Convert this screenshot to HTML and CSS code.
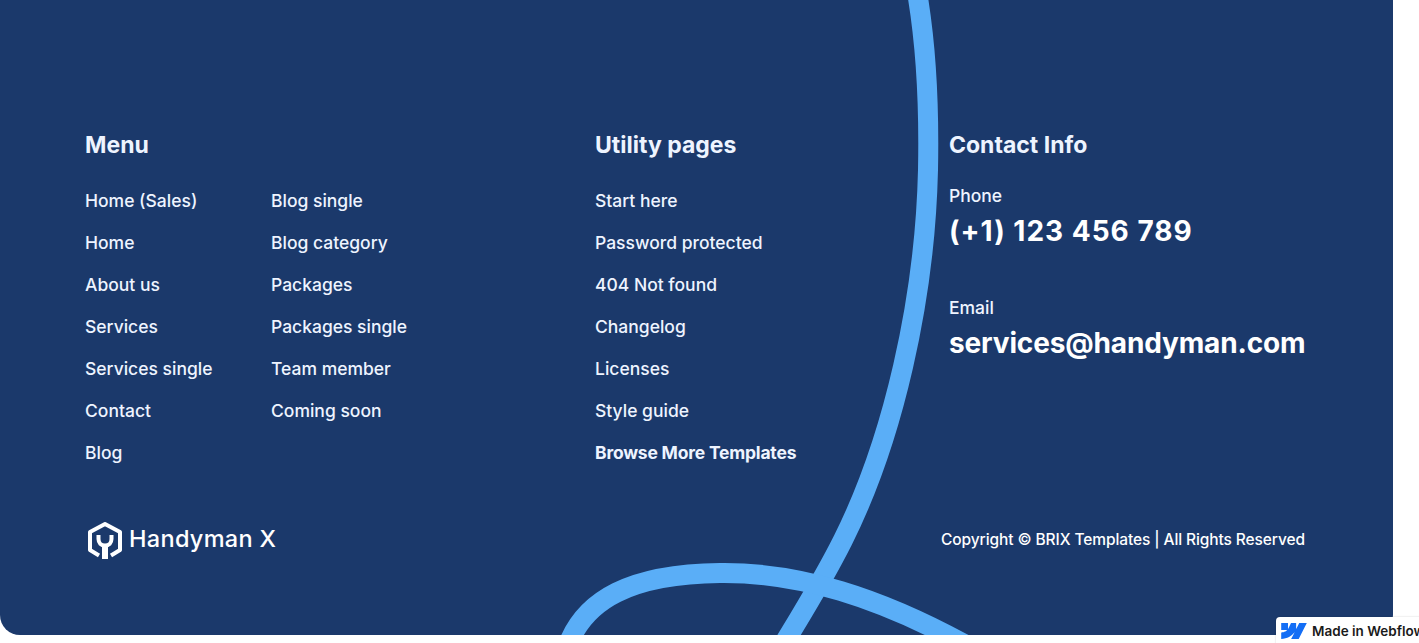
FILE: index.html
```html
<!DOCTYPE html>
<html lang="en">
<head>
  <meta charset="UTF-8">
  <title>Handyman X</title>
  <link rel="stylesheet" href="styles.css">
</head>
<body>
  <footer class="footer">
    <svg class="curves" width="1393" height="635" viewBox="0 0 1393 635" fill="none">
      <path d="M918 -2C928 60 929 120 928 170C925 300 893 440 843 540C823 580 803 612 783 645" stroke="#5aaef7" stroke-width="20"/>
      <path d="M568 645C585 600 630 574 720 573C800 572 880 598 966 645" stroke="#5aaef7" stroke-width="20"/>
    </svg>

    <div class="columns">
      <section class="col col-menu">
        <h3>Menu</h3>
        <div class="menu-lists">
          <ul class="links">
            <li><a href="#">Home (Sales)</a></li>
            <li><a href="#">Home</a></li>
            <li><a href="#">About us</a></li>
            <li><a href="#">Services</a></li>
            <li><a href="#">Services single</a></li>
            <li><a href="#">Contact</a></li>
            <li><a href="#">Blog</a></li>
          </ul>
          <ul class="links">
            <li><a href="#">Blog single</a></li>
            <li><a href="#">Blog category</a></li>
            <li><a href="#">Packages</a></li>
            <li><a href="#">Packages single</a></li>
            <li><a href="#">Team member</a></li>
            <li><a href="#">Coming soon</a></li>
          </ul>
        </div>
      </section>

      <section class="col col-utility">
        <h3>Utility pages</h3>
        <ul class="links">
          <li><a href="#">Start here</a></li>
          <li><a href="#">Password protected</a></li>
          <li><a href="#">404 Not found</a></li>
          <li><a href="#">Changelog</a></li>
          <li><a href="#">Licenses</a></li>
          <li><a href="#">Style guide</a></li>
          <li><a href="#" class="strong">Browse More Templates</a></li>
        </ul>
      </section>

      <section class="col col-contact">
        <h3>Contact Info</h3>
        <div class="contact-item">
          <div class="contact-label">Phone</div>
          <a href="#" class="contact-value phone">(+1) 123 456 789</a>
        </div>
        <div class="contact-item">
          <div class="contact-label">Email</div>
          <a href="#" class="contact-value">services@handyman.com</a>
        </div>
      </section>
    </div>

    <div class="bottom">
      <a href="#" class="logo">
        <svg width="34" height="37" viewBox="0 0 34 37" fill="none">
          <path d="M11 33.500L2 28V10L17 2L32 10V28L23 33.500" stroke="#fff" stroke-width="4" stroke-linejoin="round"/>
          <path d="M10.500 13V17C10.500 21 13 23.500 17 23.500C21 23.500 23.500 21 23.500 17V13" stroke="#fff" stroke-width="4"/>
          <path d="M17 22V37" stroke="#fff" stroke-width="6"/>
        </svg>
        <span>Handyman X</span>
      </a>
      <div class="copyright">Copyright © BRIX Templates | All Rights Reserved</div>
    </div>
  </footer>

  <a href="#" class="badge">
    <svg width="26" height="16" viewBox="0 0 24 15"><path d="M24 0L16.400 15H9.300L12.500 8.800H12.300C9.700 12.200 5.800 14.500 0 15V8.900C0 8.900 3.600 8.700 5.700 6.500H0V0H6.400V5.300H6.600L9.200 0H14V5.300H14.200L16.900 0Z" fill="#146ef5"/></svg>
    <span>Made in Webflow</span>
  </a>
</body>
</html>
```

FILE: styles.css
```css
html, body {
  margin: 0;
  height: 643px;
  overflow: hidden;
  background-color: #fff;
}
body {
  font-family: Inter, sans-serif;
  position: relative;
}
a {
  color: inherit;
  text-decoration: none;
}

.footer {
  position: relative;
  box-sizing: border-box;
  width: 1393px;
  height: 635px;
  padding: 133px 88px 0 85px;
  background-color: #1b396b;
  border-radius: 0 0 20px 20px;
  overflow: hidden;
  color: #eef4ff;
}
.curves {
  position: absolute;
  left: 0;
  top: 0;
}

.columns {
  position: relative;
  display: flex;
  height: 350px;
}
.col {
  flex: none;
}
.col h3 {
  margin: 0 0 26px;
  font-size: 23px;
  line-height: 24px;
  font-weight: 700;
}
.col-contact h3 {
  margin-bottom: 25px;
}
.col-menu {
  width: 510px;
}
.col-utility {
  width: 354px;
}
.menu-lists {
  display: flex;
  gap: 61px;
}
.menu-lists .links:first-child {
  width: 125px;
}

.links {
  margin: 0;
  padding: 0;
  list-style: none;
}
.links li {
  height: 42px;
  font-size: 17.500px;
  line-height: 36px;
  font-weight: 500;
  white-space: nowrap;
}
.links .strong {
  font-weight: 700;
  letter-spacing: -0.2px;
}

.contact-item {
  margin-bottom: 41px;
}
.contact-label {
  font-size: 17.500px;
  line-height: 27px;
  font-weight: 500;
}
.contact-value {
  display: block;
  font-size: 28px;
  line-height: 44px;
  font-weight: 700;
  letter-spacing: -0.15px;
  color: #fff;
  white-space: nowrap;
}
.contact-value.phone {
  letter-spacing: 1px;
}

.bottom {
  position: relative;
  display: flex;
  justify-content: space-between;
  align-items: center;
  margin-top: 39px;
}
.logo {
  display: flex;
  align-items: center;
  gap: 7px;
  padding-left: 3px;
  color: #fff;
  font-size: 23.500px;
  font-weight: 500;
  letter-spacing: 0.3px;
}
.logo span {
  padding-bottom: 4px;
}
.copyright {
  padding-bottom: 3px;
  font-size: 15.500px;
  font-weight: 500;
  letter-spacing: -0.1px;
  color: #fff;
}

.badge {
  position: absolute;
  left: 1276px;
  top: 617px;
  width: 160px;
  height: 30px;
  display: flex;
  align-items: center;
  gap: 5px;
  padding: 0 5px 2px;
  box-sizing: border-box;
  background-color: #fff;
  border-radius: 4px 0 0 0;
  box-shadow: 0 0 2px rgba(0, 0, 0, 0.2);
  color: #1a1a1a;
  font-size: 13.500px;
  font-weight: 600;
  white-space: nowrap;
}
```
